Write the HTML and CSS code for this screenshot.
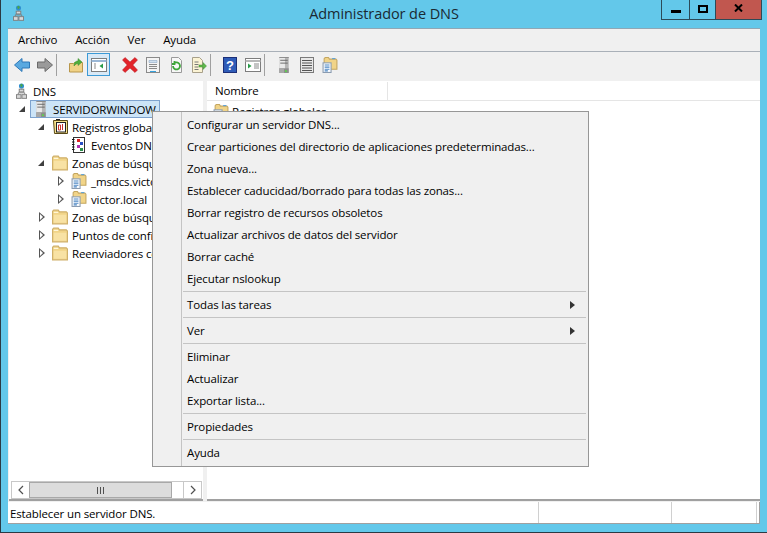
FILE: index.html
```html
<!DOCTYPE html>
<html lang="es">
<head>
<meta charset="utf-8">
<title>Administrador de DNS</title>
<link rel="stylesheet" href="styles.css">
</head>
<body>
<svg class="defs" width="0" height="0" aria-hidden="true">
  <defs>
    <symbol id="net" viewBox="0 0 12 17">
      <circle cx="6" cy="3" r="2.800" fill="#2f8fd0"/>
      <path d="M4.500 1.500l2-1 1 2-1.500 2-1-1z" fill="#4aa64a"/>
      <path d="M6 6v3M2.500 12v-1.500h7V12" fill="none" stroke="#7d7d7d"/>
      <rect x="3.500" y="6.500" width="5" height="3" fill="#d8d8d8" stroke="#7d7d7d"/>
      <rect x="0.500" y="12.500" width="5" height="4" fill="#d8d8d8" stroke="#7d7d7d"/>
      <rect x="6.500" y="12.500" width="5" height="4" fill="#d8d8d8" stroke="#7d7d7d"/>
    </symbol>
    <symbol id="server" viewBox="0 0 10 17">
      <rect x="0" y="0" width="10" height="17" fill="#b5b5b5"/>
      <rect x="0" y="0" width="6" height="17" fill="#e9e9e9"/>
      <rect x="0" y="0" width="10" height="1" fill="#8a8a8a"/>
      <path d="M1 3.500h8M1 6.500h8" stroke="#666"/>
      <rect x="0" y="12" width="10" height="5" fill="#8d8d8d"/>
      <rect x="0" y="12" width="5" height="5" fill="#a8a8a8"/>
      <rect x="6" y="14" width="2" height="2" fill="#5fd04f"/>
    </symbol>
    <symbol id="folder" viewBox="0 0 14 13">
      <path d="M0.500 12.500V1.500l1-1h4l1 1.500h6l1 1v9.500z" fill="#f1d488" stroke="#cfb06a"/>
      <path d="M1.500 11.500V4.500h11v7z" fill="#f8e2a4"/>
      <path d="M1.500 2.500h4" stroke="#fff6d8"/>
    </symbol>
    <symbol id="docfolder" viewBox="0 0 14 15">
      <path d="M1.500 11.500V1.500l1-1h3l1 1.500h6l1 1v8.500z" fill="#f1d488" stroke="#c4a660"/>
      <path d="M9 1.500h3" stroke="#5aa0d8"/>
      <rect x="0.500" y="5.500" width="7.500" height="9" fill="#fbfdff" stroke="#8a9bb0"/>
      <path d="M2 7.500h4.500M2 9.500h4.500M2 11.500h4.500M2 13h3" stroke="#4d87c4"/>
    </symbol>
    <symbol id="log" viewBox="0 0 16 16">
      <path d="M1.500 1.500l1 13h13V1.500z" fill="#f6e08a" stroke="#5a4a18"/>
      <rect x="4.500" y="3.500" width="9" height="9.500" fill="#fff" stroke="#222"/>
      <path d="M6.500 6h2v5h-2zM10.500 5v6" stroke="#c8322a" fill="none"/>
      <path d="M4 0.500h4" stroke="#222"/>
    </symbol>
    <symbol id="events" viewBox="0 0 14 16">
      <rect x="1.500" y="0.500" width="11" height="15" fill="#fff" stroke="#333"/>
      <path d="M0 2.500h2.500M0 5h2.500M0 7.500h2.500M0 10h2.500M0 12.500h2.500" stroke="#111"/>
      <path d="M5 2h3v3H5z" fill="#d22"/>
      <path d="M8 5h3v3H8z" fill="#2a4fc4"/>
      <path d="M5 8h3v3H5z" fill="#b030b0"/>
      <path d="M8 11h3v3H8z" fill="#2a8f4a"/>
    </symbol>
  </defs>
</svg>

<div class="window">
  <header class="titlebar">
    <div class="title-left"><svg class="ico-app"><use href="#net"/></svg></div>
    <div class="title-text">Administrador de DNS</div>
    <div class="controls">
      <div class="ctl ctl-min"><span class="glyph-min"></span></div>
      <div class="ctl ctl-max"><span class="glyph-max"></span></div>
      <div class="ctl ctl-close">
        <svg class="glyph-x" viewBox="0 0 9 8"><path d="M1 0.500l7 7M8 0.500l-7 7" fill="none" stroke="#000" stroke-width="2"/></svg>
      </div>
    </div>
  </header>

  <div class="client">
    <nav class="menubar">
      <span class="menu-item">Archivo</span>
      <span class="menu-item">Acción</span>
      <span class="menu-item">Ver</span>
      <span class="menu-item">Ayuda</span>
    </nav>

    <div class="toolbar">
      <div class="tbtn"><svg class="ti" viewBox="0 0 16 16"><path d="M0.500 8L8 1.500V5h7.500v6H8v3.500z" fill="#5aa9e0" stroke="#2f79b8"/></svg></div>
      <div class="tbtn"><svg class="ti" viewBox="0 0 16 16"><path d="M15.500 8L8 1.500V5H0.500v6H8v3.500z" fill="#9a9a9a" stroke="#6a6a6a"/></svg></div>
      <div class="tsep"></div>
      <div class="tbtn"><svg class="ti" viewBox="0 0 16 16"><path d="M1.500 15V6.500h4l1-1h8V15z" fill="#f0d286" stroke="#b8964a"/><path d="M6 9c0-4 2-5 4-5V1.500L14 5l-4 3.500V6.500C8 6.500 7 8 6 9z" fill="#4fae3c" stroke="#3a8a2c" stroke-width="0.500"/></svg></div>
      <div class="tbtn tbtn-on"><svg class="ti" viewBox="0 0 16 14"><rect x="0.500" y="0.500" width="15" height="13" fill="#fff" stroke="#7d7d7d"/><path d="M0.500 3h15" stroke="#9ab7d6" stroke-width="2"/><path d="M3 6h2M3 8h2M3 10h2" stroke="#8a8a8a"/><path d="M12 5.500v5L8.500 8z" fill="#2a9c4a"/></svg></div>
      <div class="tgap"></div>
      <div class="tbtn"><svg class="ti" viewBox="0 0 16 16"><path d="M0.500 3L3 0.500 8 5 13 0.500 15.500 3 10.800 8 15.500 13 13 15.500 8 11 3 15.500 0.500 13 5.200 8z" fill="#e2242a" stroke="#b5161c" stroke-width="0.500"/></svg></div>
      <div class="tbtn"><svg class="ti" viewBox="0 0 16 16"><rect x="1.500" y="0.500" width="13" height="15" fill="#f4f4f4" stroke="#8a8a8a"/><path d="M4 3.500h8v2H4z" fill="#cfe0f0" stroke="#7f9cbc" stroke-width="0.500"/><path d="M4 7.500h8M4 9.500h8M4 11.500h8" stroke="#8a8a8a"/><path d="M5 14.500h6" stroke="#35a0dc"/></svg></div>
      <div class="tbtn"><svg class="ti" viewBox="0 0 16 16"><path d="M3.500 0.500h7l3 3v12h-10z" fill="#f7f7f7" stroke="#9a9a9a"/><path d="M5 9a3.500 3.500 0 1 0 1-2.500M6.500 4v3H4" fill="none" stroke="#3da638" stroke-width="1.800"/></svg></div>
      <div class="tbtn"><svg class="ti" viewBox="0 0 16 16"><path d="M1.500 0.500h7l3 3v12h-10z" fill="#fbf3d4" stroke="#a8a08a"/><path d="M3.500 5h4M3.500 7.500h4M3.500 10h4M3.500 12.500h4" stroke="#777"/><path d="M8 8h4V5.500L15.500 9 12 12.500V10H8z" fill="#5fb84a" stroke="#3e8f30" stroke-width="0.500"/></svg></div>
      <div class="tsep"></div>
      <div class="tbtn"><svg class="ti" viewBox="0 0 14 16"><rect x="0.500" y="0.500" width="13" height="15" fill="#2f5cb8" stroke="#1c2f78"/><text class="help-q" x="7" y="12.500">?</text></svg></div>
      <div class="tbtn"><svg class="ti" viewBox="0 0 16 14"><rect x="0.500" y="0.500" width="15" height="13" fill="#fff" stroke="#7d7d7d"/><path d="M0.500 3h15" stroke="#b8b8b8" stroke-width="2"/><path d="M9 6h5M9 8h5M9 10h5" stroke="#8a8a8a"/><path d="M3 5.500v5L6.500 8z" fill="#2a9c4a"/></svg></div>
      <div class="tsep"></div>
      <div class="tbtn"><svg class="ti ti-server"><use href="#server"/></svg></div>
      <div class="tbtn"><svg class="ti" viewBox="0 0 14 16"><rect x="0.500" y="0.500" width="13" height="15" fill="#e8e8e8" stroke="#7a7a7a"/><path d="M2 3.500h10M2 6h10M2 8.500h10M2 11h10M2 13.500h10" stroke="#555"/></svg></div>
      <div class="tbtn"><svg class="ti"><use href="#docfolder"/></svg></div>
    </div>

    <div class="panes">
      <aside class="tree-pane">
        <div class="tree">
          <div class="row row-0"><svg class="i i-net"><use href="#net"/></svg><span class="label">DNS</span></div>
          <div class="row row-1"><span class="exp exp-open"></span>
            <div class="selected"><svg class="i i-srv"><use href="#server"/></svg><span class="label">SERVIDORWINDOW</span></div></div>
          <div class="row row-2"><span class="exp exp-open"></span><svg class="i"><use href="#log"/></svg><span class="label">Registros globales</span></div>
          <div class="row row-3"><span class="exp"></span><svg class="i"><use href="#events"/></svg><span class="label">Eventos DNS</span></div>
          <div class="row row-2"><span class="exp exp-open"></span><svg class="i"><use href="#folder"/></svg><span class="label">Zonas de búsqueda directa</span></div>
          <div class="row row-3"><span class="exp exp-closed"></span><svg class="i"><use href="#docfolder"/></svg><span class="label">_msdcs.victor.local</span></div>
          <div class="row row-3"><span class="exp exp-closed"></span><svg class="i"><use href="#docfolder"/></svg><span class="label">victor.local</span></div>
          <div class="row row-2"><span class="exp exp-closed"></span><svg class="i"><use href="#folder"/></svg><span class="label">Zonas de búsqueda inversa</span></div>
          <div class="row row-2"><span class="exp exp-closed"></span><svg class="i"><use href="#folder"/></svg><span class="label">Puntos de confianza</span></div>
          <div class="row row-2"><span class="exp exp-closed"></span><svg class="i"><use href="#folder"/></svg><span class="label">Reenviadores condicionales</span></div>
        </div>
        <div class="hscroll">
          <div class="sbtn"><svg class="chev" viewBox="0 0 6 10"><path d="M5 1L1 5l4 4" fill="none" stroke="#505050" stroke-width="1.200"/></svg></div>
          <div class="sthumb"><span class="grip"></span></div>
          <div class="strack"></div>
          <div class="sbtn"><svg class="chev" viewBox="0 0 6 10"><path d="M1 1l4 4-4 4" fill="none" stroke="#505050" stroke-width="1.200"/></svg></div>
        </div>
      </aside>
      <main class="list-pane">
        <div class="list-head">
          <div class="col col-name">Nombre</div>
          <div class="col col-rest"></div>
        </div>
        <div class="list-row"><svg class="i"><use href="#docfolder"/></svg><span class="label">Registros globales</span></div>
      </main>
    </div>

    <footer class="statusbar">
      <div class="st st-main">Establecer un servidor DNS.</div>
      <div class="st st-b"></div>
      <div class="st st-c"></div>
    </footer>
  </div>

  <div class="ctx">
    <div class="mi">Configurar un servidor DNS...</div>
    <div class="mi">Crear particiones del directorio de aplicaciones predeterminadas...</div>
    <div class="mi">Zona nueva...</div>
    <div class="mi">Establecer caducidad/borrado para todas las zonas...</div>
    <div class="mi">Borrar registro de recursos obsoletos</div>
    <div class="mi">Actualizar archivos de datos del servidor</div>
    <div class="mi">Borrar caché</div>
    <div class="mi">Ejecutar nslookup</div>
    <div class="ms"></div>
    <div class="mi mi-sub">Todas las tareas</div>
    <div class="ms"></div>
    <div class="mi mi-sub">Ver</div>
    <div class="ms"></div>
    <div class="mi">Eliminar</div>
    <div class="mi">Actualizar</div>
    <div class="mi">Exportar lista...</div>
    <div class="ms"></div>
    <div class="mi">Propiedades</div>
    <div class="ms"></div>
    <div class="mi">Ayuda</div>
  </div>
</div>
</body>
</html>
```

FILE: styles.css
```css
* { box-sizing: border-box; }
html, body { margin: 0; padding: 0; }
body {
  width: 767px;
  height: 533px;
  overflow: hidden;
  font-family: "Open Sans", "Liberation Sans", sans-serif;
  font-size: 11.5px;
  letter-spacing: -0.13px;
  color: #000;
}
.defs { position: absolute; }
.window {
  position: relative;
  width: 767px;
  height: 533px;
  background: #63c8ea;
  border-left: 1px solid #2b3a44;
  border-bottom: 1px solid #2b3a44;
  display: flex;
  flex-direction: column;
}

/* title bar */
.titlebar {
  height: 28px;
  flex: none;
  display: grid;
  grid-template-columns: 1fr auto 1fr;
}
.title-left { padding: 5px 0 0 12px; }
.ico-app { display: block; width: 11px; height: 16px; }
.title-text {
  font-size: 14.5px;
  letter-spacing: -0.08px;
  line-height: 28px;
  color: #1a2a33;
}
.controls { display: flex; justify-content: flex-end; align-items: flex-start; padding-right: 5px; }
.ctl {
  height: 20px;
  border: 1px solid #2c4a58;
  border-top: 0;
  margin-left: -1px;
  display: flex;
  align-items: center;
  justify-content: center;
}
.ctl-min { width: 29px; }
.ctl-max { width: 27px; }
.ctl-close { width: 47px; background: #c1574f; }
.glyph-min { display: block; width: 10px; height: 3px; background: #000; margin-top: 3px; }
.glyph-max { display: block; width: 10px; height: 8px; border: 2px solid #000; margin-top: -2px; }
.glyph-x { display: block; width: 9px; height: 8px; margin-top: -3px; }

/* client */
.client {
  flex: 1;
  margin: 0 7px 8px 7px;
  background: #f0f0f0;
  display: flex;
  flex-direction: column;
  border-top: 1px solid #8fa7b5;
  min-height: 0;
}
.menubar {
  height: 23px;
  flex: none;
  border-bottom: 1px solid #a9b0b8;
  padding: 0 0 0 2px;
  display: flex;
  align-items: center;
  gap: 2px;
}
.menu-item { padding: 0 8px; line-height: 22px; }

.toolbar {
  height: 29px;
  flex: none;
  display: flex;
  align-items: flex-start;
  padding: 1px 0 0 2px;
}
.tbtn {
  width: 23px;
  height: 23px;
  display: flex;
  align-items: center;
  justify-content: center;
}
.tbtn-on { background: #d9e9f6; border: 1px solid #3c9ad6; }
.ti { display: block; width: 16px; height: 16px; }
.ti-server { width: 10px; }
.tsep { width: 1px; height: 22px; background: #a0a0a0; margin: 1px 7px 0 0; }
.tgap { width: 8px; }
.help-q { font: bold 13px "Liberation Sans", sans-serif; fill: #fff; text-anchor: middle; }

/* panes */
.panes { flex: 1; display: flex; gap: 4px; min-height: 0; padding-left: 1px; }
.tree-pane {
  width: 194px;
  background: #fff;
  display: flex;
  flex-direction: column;
  border-bottom: 2px solid #a0a0a0;
  overflow: hidden;
}
.tree { flex: 1; padding-top: 1px; }
.row { height: 18px; display: flex; align-items: center; white-space: nowrap; }
.row-0 { padding-left: 7px; }
.row-1 { padding-left: 11px; }
.row-2 { padding-left: 30px; }
.row-3 { padding-left: 49px; }
.row-0 .i-net { width: 11px; height: 16px; margin-right: 2px; }
.exp { width: 13px; height: 12px; flex: none; position: relative; }
.exp-open::after {
  content: "";
  position: absolute;
  left: -1px; top: 3px;
  border-style: solid;
  border-width: 0 0 6px 6px;
  border-color: transparent transparent #404040 transparent;
}
.exp-closed::after {
  content: "";
  position: absolute;
  left: 0; top: 1px;
  border-style: solid;
  border-width: 5px 0 5px 6px;
  border-color: transparent transparent transparent #555;
}
.exp-closed::before {
  content: "";
  position: absolute;
  z-index: 1;
  left: 1px; top: 3px;
  border-style: solid;
  border-width: 3px 0 3px 3.500px;
  border-color: transparent transparent transparent #fff;
}
.i { width: 16px; height: 16px; flex: none; display: block; }
.label { margin-left: 4px; }
.selected {
  margin-left: -3px;
  display: flex;
  align-items: center;
  height: 18px;
  width: 130px;
  padding-left: 5px;
  background: #cce4f7;
  border: 1px solid #7da2ce;
  overflow: hidden;
}
.selected .i-srv { width: 10px; height: 16px; }
.selected .label { margin-left: 7px; }

.hscroll { height: 18px; flex: none; display: flex; margin: 0 1px 0 2px; border: 1px solid #c8c8c8; background: #fff; }
.sbtn { width: 17px; display: flex; align-items: center; justify-content: center; }
.sthumb {
  width: 143px;
  background: #dcdcdc;
  border: 1px solid #a8a8a8;
  display: flex;
  align-items: center;
  justify-content: center;
}
.grip { width: 7px; height: 7px; background: repeating-linear-gradient(90deg, #505050 0 1px, transparent 1px 3px); }
.strack { flex: 1; border-right: 1px solid #c8c8c8; }
.chev { width: 6px; height: 10px; display: block; }

.list-pane { flex: 1; background: #fff; border-bottom: 2px solid #a0a0a0; min-width: 0; }
.list-head { height: 20px; display: flex; border-bottom: 1px solid #e5e5e5; border-top: 1px solid #fff; }
.col { line-height: 18px; padding-left: 8px; }
.col-name { width: 181px; border-right: 1px solid #e5e5e5; }
.col-rest { flex: 1; }
.list-row { display: flex; align-items: center; padding: 1px 0 0 6px; height: 20px; }
.list-row .label { margin-left: 3px; }

/* status bar */
.statusbar {
  height: 22px;
  flex: none;
  margin-top: 1px;
  display: flex;
  background: #fff;
  border-bottom: 1px solid #a0a0a0;
  border-right: 1px solid #a0a0a0;
}
.st { height: 21px; line-height: 23px; padding-left: 2px; border-right: 1px solid #d0d0d0; }
.st-main { width: 531px; }
.st-b { width: 133px; }
.st-c { width: 85px; }

/* context menu */
.ctx {
  position: absolute;
  left: 151px;
  top: 111px;
  width: 437px;
  height: 356px;
  padding: 2px;
  background: linear-gradient(90deg, #f0f0f0 0 28px, #c4c4c4 28px 29px, #f0f0f0 29px);
  border: 1px solid #979797;
}
.mi { height: 22px; line-height: 22px; padding-left: 32px; position: relative; white-space: nowrap; color: #000; }
.ms { height: 4px; margin-left: 28px; padding-top: 1px; }
.ms::after { content: ""; display: block; height: 1px; background: #c4c4c4; }
.mi-sub::after {
  content: "";
  position: absolute;
  right: 11px; top: 7px;
  border-style: solid;
  border-width: 4px 0 4px 5px;
  border-color: transparent transparent transparent #333;
}
```
